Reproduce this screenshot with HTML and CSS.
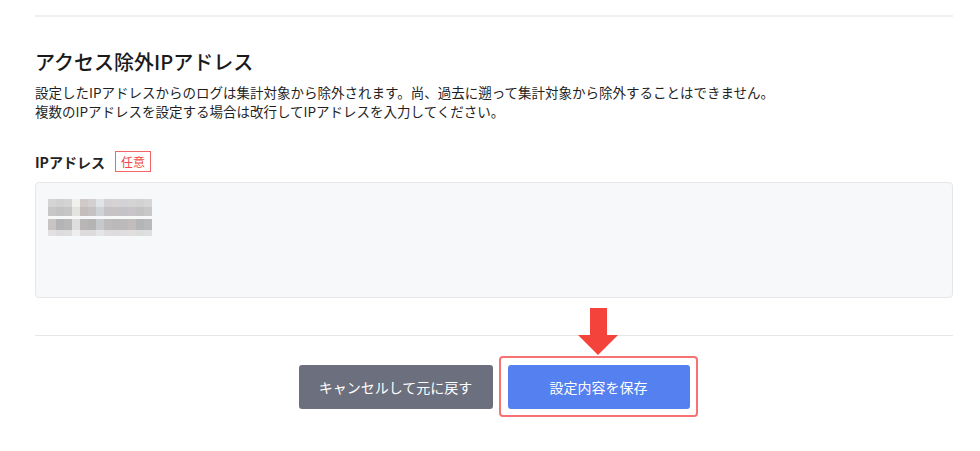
FILE: index.html
```html
<!DOCTYPE html>
<html lang="ja">
<head>
<meta charset="utf-8">
<title>アクセス除外IPアドレス</title>
<link rel="stylesheet" href="styles.css">
</head>
<body>
<div class="page">
  <section class="section">
    <h2 class="title">アクセス除外IPアドレス</h2>
    <p class="desc">設定したIPアドレスからのログは集計対象から除外されます。尚、過去に遡って集計対象から除外することはできません。<br>複数のIPアドレスを設定する場合は改行してIPアドレスを入力してください。</p>
    <div class="field-label">
      <span class="label-text">IPアドレス</span>
      <span class="badge">任意</span>
    </div>
    <div class="textbox">
      <div class="mosaic-line">
        <div class="band b1"></div>
        <div class="band b2"></div>
      </div>
      <div class="mosaic-line">
        <div class="band b3"></div>
        <div class="band b4"></div>
      </div>
    </div>
  </section>
  <div class="actions">
    <button class="btn btn-cancel">キャンセルして元に戻す</button>
    <div class="save-wrap">
      <svg class="arrow" width="40" height="47" viewBox="0 0 40 47"><polygon points="12,0 29,0 29,27 40,27 20,47 0,27 12,27" fill="#f4433a"/></svg>
      <div class="highlight"></div>
      <button class="btn btn-save">設定内容を保存</button>
    </div>
  </div>
</div>
</body>
</html>
```
FILE: styles.css
```css
* { box-sizing: border-box; }
html, body { margin: 0; padding: 0; background: #fff; }
body {
  font-family: "Noto Sans CJK JP", "Noto Sans", sans-serif;
  color: #222;
}
.page {
  width: 918px;
  margin-left: 35px;
  padding-top: 15px;
  padding-bottom: 34px;
}
.section {
  border-top: 2px solid #efefef;
  border-bottom: 1px solid #e6e6e6;
  padding-top: 31px;
  padding-bottom: 37px;
}
.title {
  margin: 0;
  font-size: 20px;
  line-height: 28px;
  font-weight: 500;
  color: #1a1a1a;
}
.desc {
  margin: 6.5px 0 0;
  font-size: 13.5px;
  line-height: 19px;
  color: #1f1f1f;
}
.field-label {
  display: flex;
  align-items: center;
  gap: 10px;
  margin-top: 30.5px;
  height: 21px;
}
.label-text {
  font-size: 14px;
  font-weight: 700;
  color: #222;
}
.badge {
  border: 1px solid #f46464;
  color: #f04848;
  font-size: 12px;
  line-height: 19px;
  padding: 0 5px;
}
.textbox {
  margin-top: 10px;
  height: 116px;
  background: #f7f8fa;
  border: 1px solid #e4e6e9;
  border-radius: 4px;
  padding: 16px 12px;
  display: flex;
  flex-direction: column;
  gap: 3px;
}
.mosaic-line {
  width: 104px;
  display: flex;
  flex-direction: column;
}
.b1 {
  height: 8px;
  background: linear-gradient(90deg,
    #d4d4d5 0 8px, #d0d0d1 8px 16px, #d3d3d3 16px 24px, #f0f0ef 24px 32px,
    #cfc9ca 32px 40px, #d3cecf 40px 48px, #dfe4e8 48px 56px, #d4d1d3 56px 64px,
    #d6d3d5 64px 72px, #d3d2d4 72px 80px, #d5d4d5 80px 88px, #d2d2d2 88px 96px, #d6d6d6 96px 104px);
}
.b2 {
  height: 9px;
  background: linear-gradient(90deg,
    #c7c7c8 0 8px, #c4c3c4 8px 16px, #c6c6c6 16px 24px, #e3e3e2 24px 32px,
    #c3bdbe 32px 40px, #c6c2c3 40px 48px, #cdd3d7 48px 56px, #c5c3c5 56px 64px,
    #c6c3c5 64px 72px, #c4c3c5 72px 80px, #c7c5c7 80px 88px, #c3c3c3 88px 96px, #c8c8c8 96px 104px);
}
.b3 {
  height: 11px;
  background: linear-gradient(90deg,
    #c9c4c4 0 8px, #b4b4b7 8px 16px, #b8b8b9 16px 24px, #dedede 24px 32px,
    #b8b5b5 32px 40px, #b4b4b4 40px 48px, #c6c9cc 48px 56px, #bebbbd 56px 64px,
    #bcb9bb 64px 72px, #bdbabc 72px 80px, #c2bcbc 80px 88px, #b4b5b7 88px 96px, #b8b9bb 96px 104px);
}
.b4 {
  height: 6px;
  background: linear-gradient(90deg,
    #e2e0e0 0 8px, #dcdcde 8px 16px, #dedede 16px 24px, #eeeeee 24px 32px,
    #dddbdb 32px 40px, #dcdcdc 40px 48px, #e3e5e7 48px 56px, #dfdddf 56px 64px,
    #dedcdd 64px 72px, #dfdddf 72px 80px, #e1dede 80px 88px, #dcdddd 88px 96px, #dedfe0 96px 104px);
}
.actions {
  display: flex;
  justify-content: center;
  gap: 15px;
  padding-top: 29px;
}
.btn {
  height: 44px;
  border: none;
  border-radius: 3px;
  color: #fff;
  font-family: "Noto Sans CJK JP", "Noto Sans", sans-serif;
  font-size: 14px;
  font-weight: 400;
  padding: 0;
}
.btn-cancel {
  width: 194px;
  background: #6c6f7d;
}
.btn-save {
  width: 182px;
  background: #5480f0;
  position: relative;
}
.save-wrap {
  position: relative;
  display: flex;
}
.highlight {
  position: absolute;
  left: -9px;
  right: -8px;
  top: -9px;
  bottom: -8px;
  border: 2px solid #f77272;
  border-radius: 4px;
}
.arrow {
  position: absolute;
  left: 70px;
  top: -57px;
}
```
